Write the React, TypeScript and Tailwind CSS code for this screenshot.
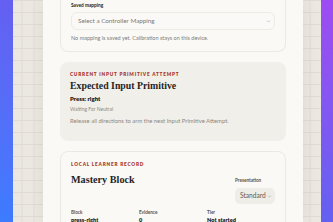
import React from 'react';
import { ChevronDown } from 'lucide-react';

const sans = "font-['Lato','Liberation_Sans',sans-serif]";
const serif = "font-['Liberation_Serif','DejaVu_Serif',serif]";

const Eyebrow = ({ children }: { children: React.ReactNode }) => (
    <p className={`${sans} text-[4.7px] leading-[6px] font-extrabold uppercase tracking-[0.17em] text-[#a8382f]`}>{children}</p>
);

const Stat = ({ label, value }: { label: string; value: string }) => (
    <div className="flex flex-col">
        <span className="text-[4.6px] leading-[7px] font-bold text-[#55524c]">{label}</span>
        <span className="text-[5.6px] leading-[8px] font-extrabold text-[#232220]">{value}</span>
    </div>
);

const App = () => {
    return (
        <div className={`${sans} h-[222px] overflow-hidden flex bg-linear-to-tr from-[#3b7cff] via-[#6460f1] to-[#9e4bf2] px-[12.5px]`}>
            <div className="flex-1 flex pl-[30.5px] pr-[17.5px] bg-[#ebe8e1] bg-[linear-gradient(#e0dcd3_1px,transparent_1px),linear-gradient(90deg,#e0dcd3_1px,transparent_1px)] bg-[length:12px_12px] bg-[position:8.5px_0px]">
                <div className="flex-1 bg-[#faf9f6] px-[17px] shadow-[0_0_14px_rgba(60,50,30,0.08)] flex flex-col gap-[10px]">
                    {/* controller mapping (scrolled, top hidden) */}
                    <section className="border border-t-0 border-[#ece9e2] rounded-b-[8px] px-[10px] pt-[2px] pb-[9px]">
                        <label className="block text-[4.8px] leading-[7px] font-bold text-[#26241f]">Saved mapping</label>
                        <div className="mt-[3px] h-[18px] flex items-center justify-between border border-[#eeebe5] rounded-[6px] pl-[6px] pr-[3px] bg-[#faf9f7]">
                            <span className="text-[6.3px] text-[#7d7a74]">Select a Controller Mapping</span>
                            <ChevronDown size={5} strokeWidth={2} className="text-[#8a8680]" />
                        </div>
                        <p className="mt-[5px] text-[5.5px] leading-[7px] text-[#7f7c76]">No mapping is saved yet. Calibration stays on this device.</p>
                    </section>

                    {/* current attempt */}
                    <section className="bg-[#f1efe9] rounded-[8px] px-[10px] pt-[9px] pb-[16px]">
                        <Eyebrow>Current Input Primitive Attempt</Eyebrow>
                        <h2 className={`${serif} mt-[2px] text-[9.8px] leading-[13px] font-bold text-[#26241f]`}>Expected Input Primitive</h2>
                        <p className="mt-[2px] text-[6px] leading-[9px] font-extrabold text-[#232220]">Press: right</p>
                        <p className="mt-[3px] text-[5px] leading-[7px] text-[#8d8a84]">Waiting For Neutral</p>
                        <p className="mt-[4px] text-[5.9px] leading-[8px] text-[#8b8882]">Release all directions to arm the next Input Primitive Attempt.</p>
                    </section>

                    {/* learner record */}
                    <section className="border border-[#ece9e2] rounded-[8px] px-[10px] pt-[9px] pb-[10px]">
                        <Eyebrow>Local Learner Record</Eyebrow>
                        <div className="flex justify-between items-start">
                            <h2 className={`${serif} mt-[6px] text-[10.2px] leading-[13px] font-bold text-[#26241f]`}>Mastery Block</h2>
                            <div className="mt-[10px] flex flex-col">
                                <span className="text-[4.6px] leading-[7px] font-bold text-[#55524c]">Presentation</span>
                                <div className="mt-[4px] w-[40px] h-[16px] flex items-center justify-between bg-[#efede7] rounded-[5px] pl-[5px] pr-[3px]">
                                    <span className="text-[6.6px] text-[#5d5a55]">Standard</span>
                                    <ChevronDown size={5} strokeWidth={2} className="text-[#8a8680]" />
                                </div>
                            </div>
                        </div>
                        <div className="mt-[5px] grid grid-cols-3">
                            <Stat label="Block" value="press-right" />
                            <Stat label="Evidence" value="0" />
                            <Stat label="Tier" value="Not started" />
                        </div>
                    </section>
                </div>
            </div>
        </div>
    );
};

export default App;
